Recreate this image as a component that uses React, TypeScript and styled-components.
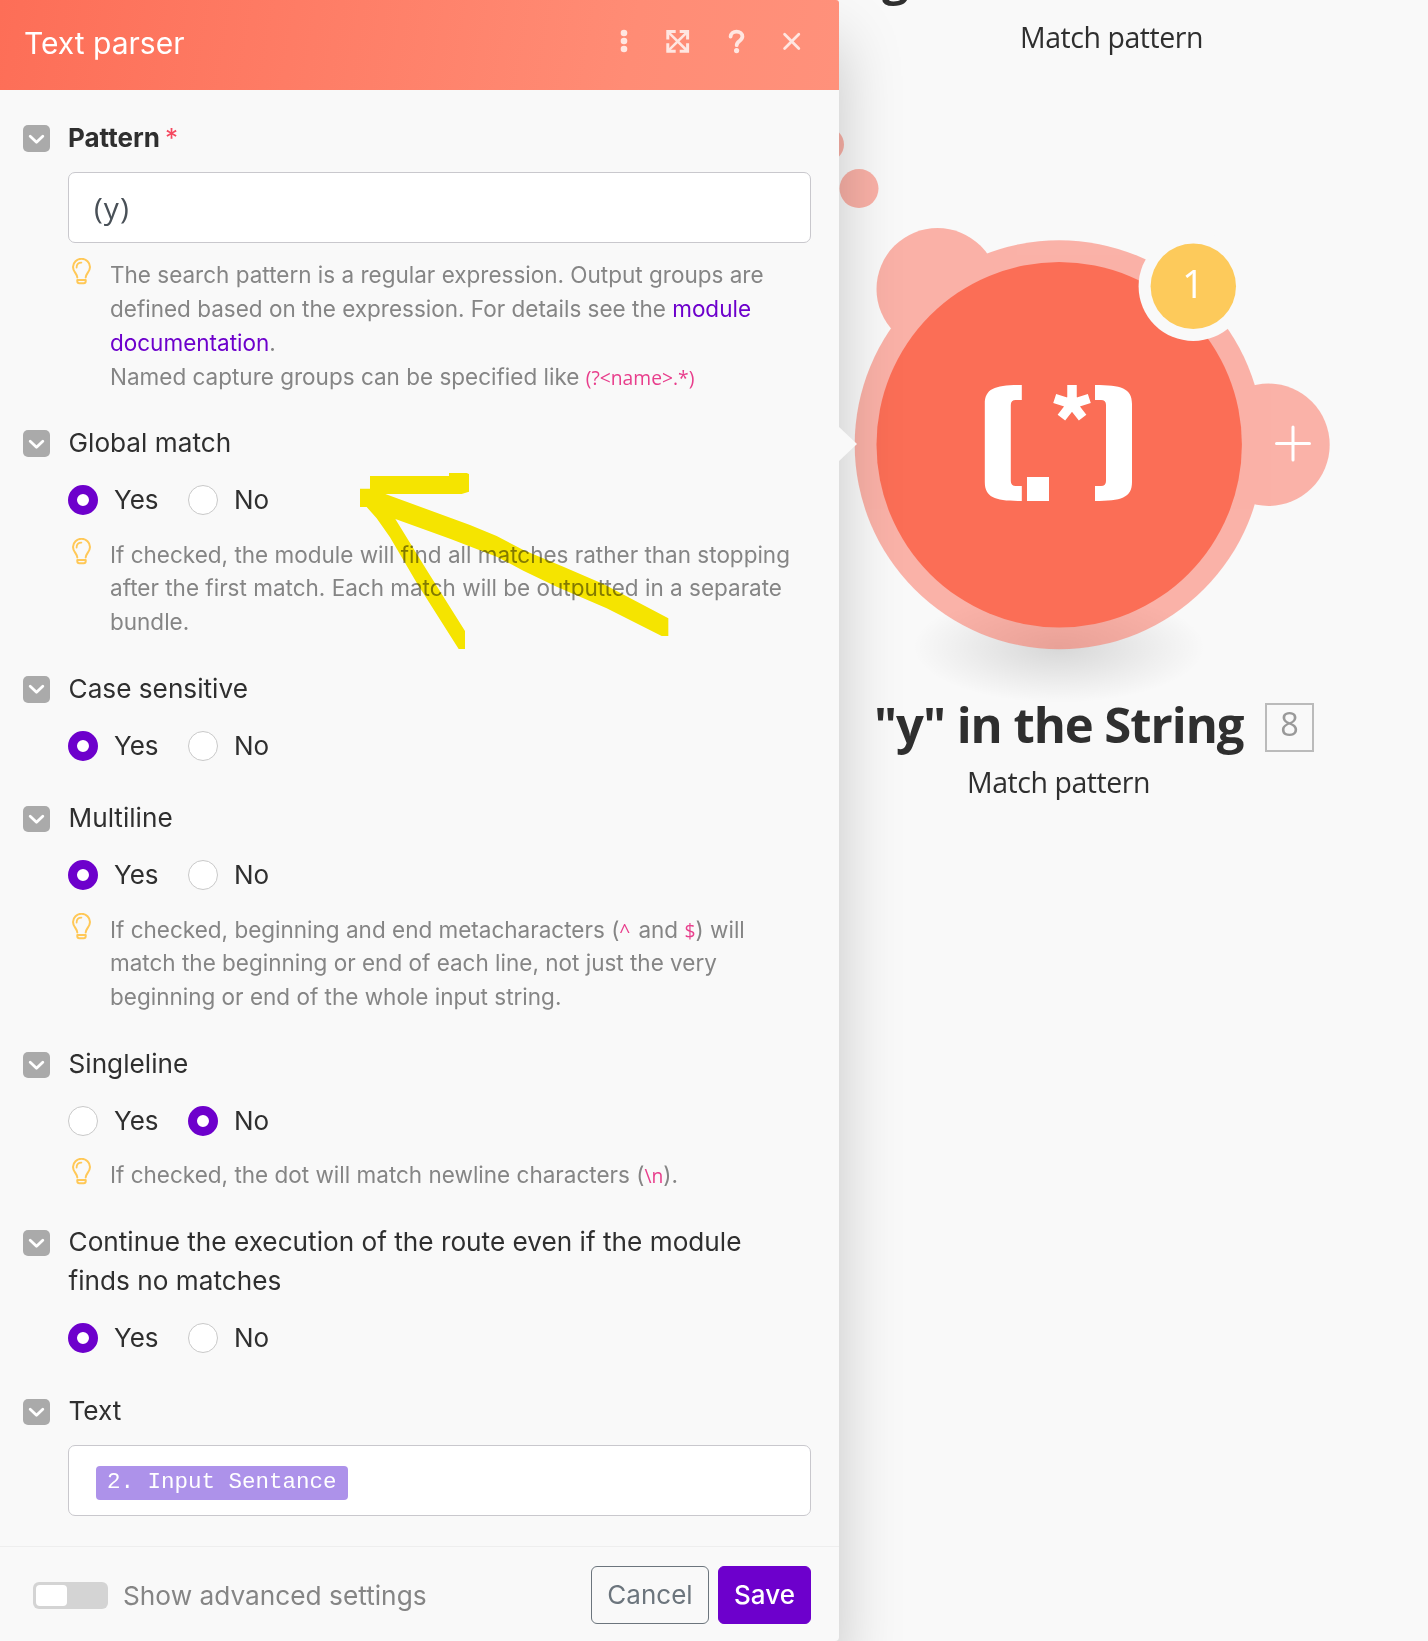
import React from "react";
import styled, { createGlobalStyle } from "styled-components";

const ui = `Inter, "Liberation Sans", sans-serif`;
const canvasFont = `"Open Sans", "Noto Sans", sans-serif`;

const GlobalStyle = createGlobalStyle`
  * { box-sizing: border-box; }
  body { margin: 0; background: #f9f9f9; }
`;

const Page = styled.div`
  position: relative;
  display: flex;
  width: 1428px;
  height: 1641px;
  overflow: hidden;
  background: #f9f9f9;
  font-family: ${ui};
  color: #2f2f2f;
`;

const Panel = styled.section`
  position: relative;
  z-index: 2;
  display: flex;
  flex-direction: column;
  width: 839px;
  height: 1641px;
  background: #f9f9f9;
  border-radius: 0 3px 4px 0;
  box-shadow: 0 40px 64px rgba(0, 0, 0, 0.21);
`;

const PanelPointer = styled.div`
  position: absolute;
  left: 838px;
  top: 426px;
  width: 19px;
  height: 36px;
  background: #f9f9f9;
  clip-path: polygon(0 0, 100% 50%, 0 100%);
`;

const Header = styled.header`
  display: flex;
  align-items: center;
  justify-content: space-between;
  height: 90px;
  padding: 0 37px 8px 24px;
  border-radius: 0 3px 0 0;
  background: linear-gradient(100deg, #fd6e57 0%, #fe7c65 35%, #ff8c75 75%, #ff917b 100%);
`;

const Title = styled.h1`
  margin: 3px 0 0;
  font-size: 30px;
  line-height: 40px;
  font-weight: 400;
  color: #fff;
`;

const HeaderIcons = styled.div`
  display: flex;
  align-items: center;
`;

const Form = styled.div`
  display: flex;
  flex-direction: column;
  flex: 1;
  padding: 27.7px 28px 0 23px;
`;

const Field = styled.div<{ $gap: number }>`
  display: grid;
  grid-template-columns: 27px 743px;
  column-gap: 18px;
  margin-bottom: ${(p) => p.$gap}px;
`;

const Collapse = styled.button`
  display: flex;
  align-items: center;
  justify-content: center;
  width: 27px;
  height: 26.5px;
  margin: 7.6px 0 0;
  padding: 0;
  border: 0;
  border-radius: 5px;
  background: #aaa;
`;

const Label = styled.div<{ $bold?: boolean }>`
  padding-left: ${(p) => (p.$bold ? 0 : 0.5)}px;
  font-size: ${(p) => (p.$bold ? 26 : 26.2)}px;
  line-height: 39px;
  font-weight: ${(p) => (p.$bold ? 700 : 400)};
`;

const Required = styled.span`
  margin-left: 5px;
  font-weight: 400;
  color: #f5485f;
`;

const Input = styled.div<{ $top: number }>`
  display: flex;
  align-items: center;
  height: 71px;
  margin-top: ${(p) => p.$top}px;
  padding-left: 25px;
  border: 1px solid #c9c8cd;
  border-radius: 7px;
  background: #fff;
  font-family: ${canvasFont};
  font-size: 30px;
  letter-spacing: 1px;
  color: #495057;
`;

const Pill = styled.span`
  display: flex;
  align-items: center;
  height: 34px;
  margin: 5px 0 0 2px;
  padding: 0 11px 2px;
  border-radius: 4px;
  background: #ad92ea;
  font-family: "Liberation Mono", monospace;
  font-size: 22.5px;
  letter-spacing: 0;
  color: #fff;
`;

const Radios = styled.div`
  display: flex;
  height: 39px;
  margin-top: 18.8px;
`;

const Option = styled.label`
  display: flex;
  align-items: center;
  gap: 16px;
  width: 120px;
  font-size: 26px;
  line-height: 39px;
`;

const OptionText = styled.span`
  margin-top: -1px;
`;

const Dot = styled.span<{ $on: boolean }>`
  width: 30px;
  height: 30px;
  border-radius: 50%;
  border: ${(p) => (p.$on ? "9.5px solid #6d00cc" : "1px solid #c9c9c9")};
  background: #fff;
`;

const Hint = styled.div<{ $top: number; $lh?: number }>`
  display: flex;
  gap: 19px;
  margin-top: ${(p) => p.$top}px;
  padding-left: 4px;
  font-size: 22.5px;
  line-height: ${(p) => p.$lh ?? 33.75}px;
  color: #858585;
  white-space: nowrap;
`;

const DocLink = styled.a`
  color: #6d00cc;
`;

const Code = styled.code<{ $after?: number }>`
  margin-right: ${(p) => p.$after ?? 0}px;
  font-family: ${canvasFont};
  font-size: 19.3px;
  line-height: 1;
  color: #e83e8c;
`;

const Footer = styled.footer`
  display: flex;
  align-items: center;
  height: 95px;
  padding: 2px 28px 0 33px;
  border-top: 1px solid #eee;
`;

const Switch = styled.span`
  width: 75px;
  height: 27px;
  padding: 3px;
  border-radius: 6px;
  background: #d4d4d4;
`;

const Knob = styled.span`
  display: block;
  width: 31px;
  height: 21px;
  border-radius: 4px;
  background: #fff;
`;

const SwitchLabel = styled.span`
  flex: 1;
  margin-left: 15px;
  font-size: 26.25px;
  color: #858585;
`;

const Button = styled.button<{ $primary?: boolean; $width: number }>`
  width: ${(p) => p.$width}px;
  height: 58px;
  margin-left: 9px;
  padding: 0 0 1px;
  border: 1px solid ${(p) => (p.$primary ? "#6d00cc" : "#6c757d")};
  border-radius: 6px;
  background: ${(p) => (p.$primary ? "#6d00cc" : "transparent")};
  color: ${(p) => (p.$primary ? "#fff" : "#6c757d")};
  font-family: ${ui};
  font-size: 26px;
  font-weight: ${(p) => (p.$primary ? 500 : 400)};
`;

const Canvas = styled.main`
  position: absolute;
  inset: 0;
  z-index: 1;
  font-family: ${canvasFont};
`;

const Drawing = styled.svg`
  position: absolute;
  left: 0;
  top: 0;
`;

const CanvasText = styled.div<{ $x: number; $y: number; $size: number; $weight?: number; $color?: string; $spacing?: number }>`
  position: absolute;
  left: ${(p) => p.$x}px;
  top: ${(p) => p.$y}px;
  font-size: ${(p) => p.$size}px;
  line-height: 1.4;
  font-weight: ${(p) => p.$weight ?? 400};
  color: ${(p) => p.$color ?? "#2f2f2f"};
  letter-spacing: ${(p) => p.$spacing ?? 0}px;
  white-space: nowrap;
`;

const NodeNumber = styled.div`
  position: absolute;
  left: 1265px;
  top: 703px;
  display: flex;
  align-items: center;
  justify-content: center;
  width: 49px;
  height: 49px;
  padding-bottom: 6px;
  border: 2px solid #bbb;
  font-size: 32.5px;
  line-height: 1;
  color: #999;
`;

const Marker = styled.svg`
  position: absolute;
  left: 350px;
  top: 460px;
  z-index: 3;
  mix-blend-mode: multiply;
`;

function Chevron() {
  return (
    <svg width="17" height="12" viewBox="0 0 17 12" fill="none">
      <path d="M2.2 3.2 8.5 9.2l6.3-6" stroke="#fff" strokeWidth="2.8" strokeLinecap="round" strokeLinejoin="round" />
    </svg>
  );
}

function Bulb() {
  return (
    <svg width="19" height="27" viewBox="0 0 19 27" fill="none" stroke="#ffc857" strokeWidth="2" strokeLinecap="round" strokeLinejoin="round">
      <path d="M5.3 19.5C5.1 15.6 1 13.8 1 8.9a8.5 8.1 0 0 1 17 0c0 4.9-4.1 6.7-4.3 10.6" />
      <path d="M4.6 9.6c0-3 2-5 4.8-5" strokeWidth="1.8" />
      <path d="M5.3 22h8.4v1.2c0 1.4-.8 2-2 2H7.3c-1.2 0-2-.6-2-2z" />
    </svg>
  );
}

function Toolbar() {
  return (
    <HeaderIcons>
      <svg width="182" height="30" viewBox="0 0 182 30" fill="none" stroke="#ffe6e1" strokeLinecap="round" strokeLinejoin="round">
        <g fill="#ffe6e1" stroke="none">
          <circle cx="4" cy="7" r="3.3" />
          <circle cx="4" cy="15" r="3.3" />
          <circle cx="4" cy="23" r="3.3" />
        </g>
        <g strokeWidth="3" strokeLinecap="square" strokeLinejoin="miter">
          <path d="M47.8 12V5.6h6.4M61.2 5.6h6.4V12M67.6 18.8v6.4h-6.4M54.2 25.2h-6.4v-6.4" />
          <path d="M48.5 6.3l18.4 18.2M66.9 6.3L48.5 24.5" strokeWidth="2.6" />
        </g>
        <path d="M110.6 10.6c.2-3.2 2.7-5 5.9-5 3.3 0 5.9 1.9 5.9 5 0 4.5-5.7 4.2-5.7 8.6" strokeWidth="3.8" />
        <circle cx="116.6" cy="24.6" r="2.6" fill="#ffe6e1" stroke="none" />
        <path d="M164.6 8.2l14.2 14.2M178.8 8.2l-14.2 14.2" strokeWidth="2.8" />
      </svg>
    </HeaderIcons>
  );
}

function YesNo({ value }: { value: "yes" | "no" }) {
  return (
    <Radios>
      <Option>
        <Dot $on={value === "yes"} />
        <OptionText>Yes</OptionText>
      </Option>
      <Option>
        <Dot $on={value === "no"} />
        <OptionText>No</OptionText>
      </Option>
    </Radios>
  );
}

function FormField({ gap, children }: { gap: number; children: React.ReactNode }) {
  return (
    <Field $gap={gap}>
      <Collapse aria-label="Collapse">
        <Chevron />
      </Collapse>
      <div>{children}</div>
    </Field>
  );
}

function NodeDrawing() {
  return (
    <Drawing width="1428" height="1641" viewBox="0 0 1428 1641">
      <defs>
        <radialGradient id="ground">
          <stop offset="0" stopColor="#000" stopOpacity="0.14" />
          <stop offset="0.35" stopColor="#000" stopOpacity="0.09" />
          <stop offset="0.7" stopColor="#000" stopOpacity="0.04" />
          <stop offset="1" stopColor="#000" stopOpacity="0" />
        </radialGradient>
      </defs>
      <ellipse cx="1059" cy="647" rx="146" ry="56" fill="url(#ground)" />
      <g fill="#fb6c57" opacity="0.5">
        <circle cx="1059.2" cy="444.7" r="204.5" />
        <circle cx="937.5" cy="289" r="61" />
        <circle cx="1268.5" cy="444.8" r="61.2" />
        <circle cx="859" cy="188.6" r="19.5" />
        <circle cx="827" cy="144.5" r="17" />
      </g>
      <circle cx="1059.2" cy="444.7" r="182.7" fill="#fb6e56" />
      <circle cx="1193.3" cy="286.3" r="54.7" fill="#f9f9f9" />
      <circle cx="1193.3" cy="286.3" r="42.7" fill="#fdca5b" />
      <path d="M1276.5 443.5h33M1293 427v33" stroke="#fff" strokeWidth="3" strokeLinecap="round" />
      <g fill="#fff">
        <path d="M1021.8 385v15h-6q-5 0-5 5v76q0 5 5 5h6v15c-26 0-37-3-37-19V404c0-16 11-19 37-19z" />
        <path d="M1095 385v15h6q5 0 5 5v76q0 5-5 5h-6v15c26 0 37-3 37-19V404c0-16-11-19-37-19z" />
        <path d="M1027 477h22v24h-22z" />
      </g>
      <path
        d="M1072 404V385M1072 404l-17.3-5.6M1072 404l17.3-5.6M1072 404l-10.6 13.7M1072 404l10.6 13.7"
        stroke="#fff"
        strokeWidth="9.5"
      />
    </Drawing>
  );
}

export default function App() {
  return (
    <Page>
      <GlobalStyle />
      <Canvas>
        <NodeDrawing />
        <CanvasText $x={882} $y={-55.5} $size={47} $weight={700} $spacing={-1}>g</CanvasText>
        <CanvasText $x={1020} $y={18} $size={28.5} $spacing={-0.45}>Match pattern</CanvasText>
        <CanvasText $x={1182} $y={256} $size={39} $weight={500} $color="#fff">1</CanvasText>
        <CanvasText $x={874} $y={690} $size={49} $weight={700} $spacing={-1.05}>"y" in the String</CanvasText>
        <NodeNumber>8</NodeNumber>
        <CanvasText $x={967} $y={763} $size={28.5} $spacing={-0.45}>Match pattern</CanvasText>
      </Canvas>

      <Panel>
        <Header>
          <Title>Text parser</Title>
          <Toolbar />
        </Header>
        <Form>
          <FormField gap={28.7}>
            <Label $bold>
              Pattern<Required>*</Required>
            </Label>
            <Input $top={15.3}>(y)</Input>
            <Hint $top={15} $lh={34}>
              <Bulb />
              <div>
                The search pattern is a regular expression. Output groups are
                <br />
                defined based on the expression. For details see the <DocLink>module</DocLink>
                <br />
                <DocLink>documentation</DocLink>.
                <br />
                Named capture groups can be specified like <Code>{"(?<name>.*)"}</Code>
              </div>
            </Hint>
          </FormField>

          <FormField gap={29.8}>
            <Label>Global match</Label>
            <YesNo value="yes" />
            <Hint $top={18.1}>
              <Bulb />
              <div>
                If checked, the module will find all matches rather than stopping
                <br />
                after the first match. Each match will be outputted in a separate
                <br />
                bundle.
              </div>
            </Hint>
          </FormField>

          <FormField gap={32.5}>
            <Label>Case sensitive</Label>
            <YesNo value="yes" />
          </FormField>

          <FormField gap={30.2}>
            <Label>Multiline</Label>
            <YesNo value="yes" />
            <Hint $top={17.8}>
              <Bulb />
              <div>
                If checked, beginning and end metacharacters (<Code $after={1.7}>^</Code> and <Code>$</Code>) will
                <br />
                match the beginning or end of each line, not just the very
                <br />
                beginning or end of the whole input string.
              </div>
            </Hint>
          </FormField>

          <FormField gap={30.7}>
            <Label>Singleline</Label>
            <YesNo value="no" />
            <Hint $top={16.8}>
              <Bulb />
              <div>
                If checked, the dot will match newline characters (<Code>\n</Code>).
              </div>
            </Hint>
          </FormField>

          <FormField gap={33.2}>
            <Label>
              Continue the execution of the route even if the module
              <br />
              finds no matches
            </Label>
            <YesNo value="yes" />
          </FormField>

          <FormField gap={0}>
            <Label>Text</Label>
            <Input $top={15}>
              <Pill>2. Input Sentance</Pill>
            </Input>
          </FormField>
        </Form>
        <Footer>
          <Switch>
            <Knob />
          </Switch>
          <SwitchLabel>Show advanced settings</SwitchLabel>
          <Button $width={118}>Cancel</Button>
          <Button $primary $width={93}>Save</Button>
        </Footer>
        <PanelPointer />
      </Panel>

      <Marker width="330" height="200" viewBox="0 180 990 600">
        <path
          fill="#fbea00"
          d="M60 228H297V219H350L357 222V275L335 282H106L360 375L440 408L520 450L640 500L760 552L955 655V708H935L770 625L620 560L520 512L440 470L300 416L136 357L230 510L345 693V747H326L200 548L120 412L80 355L50 321H30V266H60Z"
        />
      </Marker>
    </Page>
  );
}
